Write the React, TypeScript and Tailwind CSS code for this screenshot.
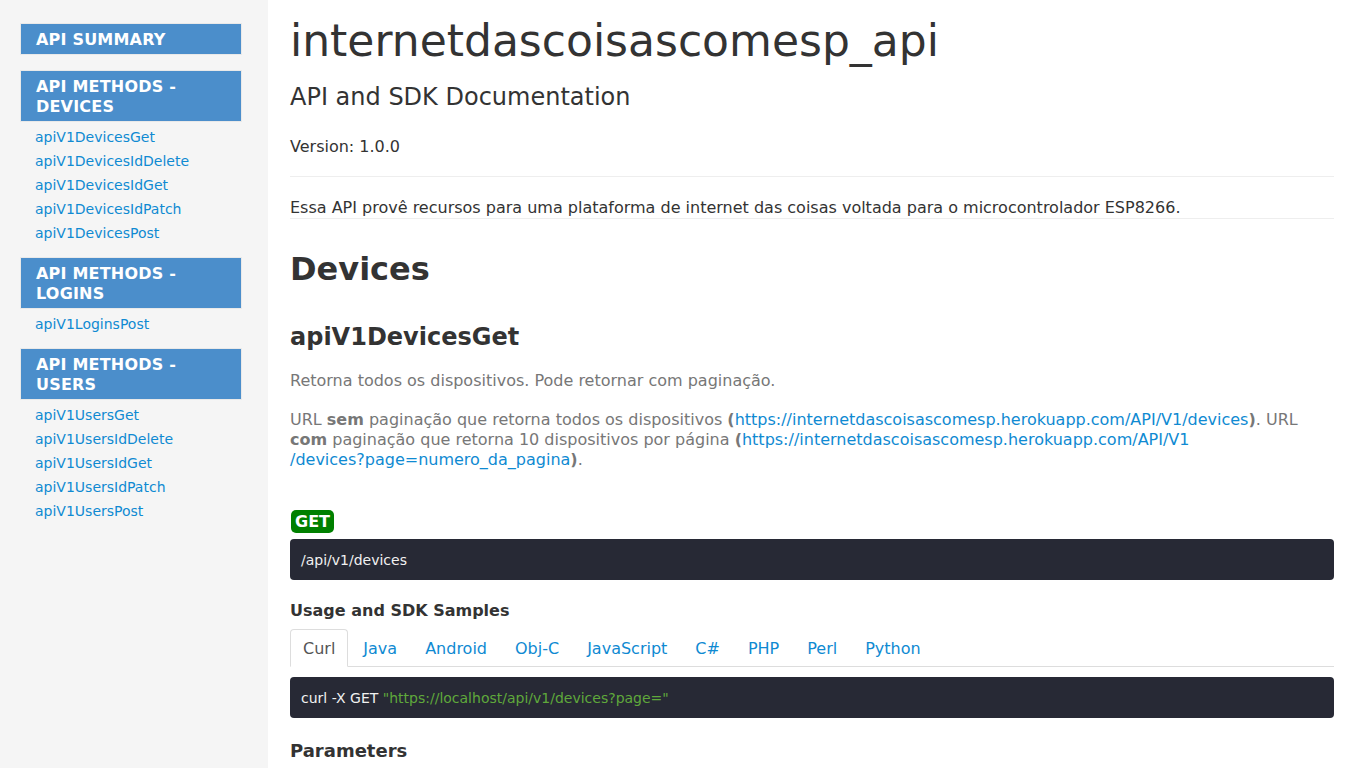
import React from 'react';

const sections = [
  { title: ['API SUMMARY'], links: [] as string[] },
  {
    title: ['API METHODS -', 'DEVICES'],
    links: ['apiV1DevicesGet', 'apiV1DevicesIdDelete', 'apiV1DevicesIdGet', 'apiV1DevicesIdPatch', 'apiV1DevicesPost'],
  },
  { title: ['API METHODS -', 'LOGINS'], links: ['apiV1LoginsPost'] },
  {
    title: ['API METHODS -', 'USERS'],
    links: ['apiV1UsersGet', 'apiV1UsersIdDelete', 'apiV1UsersIdGet', 'apiV1UsersIdPatch', 'apiV1UsersPost'],
  },
];

const tabs = ['Curl', 'Java', 'Android', 'Obj-C', 'JavaScript', 'C#', 'PHP', 'Perl', 'Python'];

const Sidebar: React.FC = () => (
  <aside className="w-[268px] shrink-0 bg-[#f5f5f5] pt-[23px] pl-[20px] pr-[26px] min-h-[1400px]">
    {sections.map((s, i) => (
      <div key={i} className={s.links.length ? 'mb-[12px]' : 'mb-[15px]'}>
        <div className="border border-[#e9e9e9] bg-[#4b8ecb] px-[15px] pt-[6px] pb-[4px] text-[16px] leading-[20px] font-bold text-white tracking-[0.2px]">
          {s.title.map((t, j) => (
            <div key={j}>{t}</div>
          ))}
        </div>
        {s.links.length > 0 && (
          <ul className="pt-[3px] pl-[15px]">
            {s.links.map((l) => (
              <li key={l} className="text-[14px] leading-[24px] text-[#0f8ad2]">
                <a href="#">{l}</a>
              </li>
            ))}
          </ul>
        )}
      </div>
    ))}
  </aside>
);

const App: React.FC = () => {
  return (
    <div className="flex min-h-screen bg-white font-['DejaVu_Sans',sans-serif] text-[#333]">
      <Sidebar />
      <main className="pl-[22px] w-[1066px]">
        <h1 className="mt-[15px] text-[44px] leading-[52px] text-[#333]">internetdascoisascomesp_api</h1>
        <h2 className="mt-[15px] text-[24px] leading-[30px] text-[#333]">API and SDK Documentation</h2>
        <p className="mt-[25px] text-[16px] leading-[20px]">Version: 1.0.0</p>
        <hr className="mt-[19px] border-t border-[#eeeeee]" />
        <div className="mt-[21px] border-b border-[#eeeeee] text-[16px] leading-[20px]">
          Essa API provê recursos para uma plataforma de internet das coisas voltada para o microcontrolador ESP8266.
        </div>

        <h1 className="mt-[30px] text-[32px] leading-[40px] font-bold">Devices</h1>
        <h2 className="mt-[33px] text-[24px] leading-[30px] font-bold">apiV1DevicesGet</h2>
        <p className="mt-[19px] text-[16px] leading-[20px] text-[#777]">
          Retorna todos os dispositivos. Pode retornar com paginação.
        </p>
        <p className="mt-[19px] text-[16px] leading-[20px] text-[#777]">
          URL <b>sem</b> paginação que retorna todos os dispositivos <b>(</b>
          <a href="#" className="text-[#0f8ad2]">https://internetdascoisascomesp.herokuapp.com/API/V1/devices</a>
          <b>)</b>. URL <b>com</b> paginação que retorna 10 dispositivos por página <b>(</b>
          <a href="#" className="text-[#0f8ad2]">
            https://internetdascoisascomesp.herokuapp.com/API/V1
            <br />
            /devices?page=numero_da_pagina
          </a>
          <b>)</b>.
        </p>

        <div className="mt-[40px] ml-px w-fit rounded-[5px] bg-[#008000] px-[4px] text-[16px] leading-[23px] font-bold text-white">
          GET
        </div>
        <div className="mt-[6px] rounded-[4px] bg-[#272935] px-[11px] pt-[11px] pb-[9px] text-[14px] leading-[21px] text-[#f1f1f1]">
          /api/v1/devices
        </div>

        <h3 className="mt-[21px] text-[16px] leading-[20px] font-bold">Usage and SDK Samples</h3>
        <ul className="mt-[8px] flex border-b border-[#dddddd]">
          {tabs.map((t, i) => (
            <li
              key={t}
              className={
                i === 0
                  ? 'mr-[2px] -mb-px rounded-t-[4px] border border-[#dddddd] border-b-white bg-white px-[12px] pt-[8px] pb-[6px] text-[16px] leading-[22px] text-[#555]'
                  : 'mr-[2px] -mb-px border border-transparent px-[12px] pt-[8px] pb-[6px] text-[16px] leading-[22px] text-[#0f8ad2]'
              }
            >
              {t}
            </li>
          ))}
        </ul>
        <div className="mt-[10px] rounded-[4px] bg-[#272935] px-[11px] pt-[11px] pb-[9px] text-[14px] leading-[21px] text-[#f1f1f1]">
          curl -X GET <span className="text-[#5fa83b]">"https://localhost/api/v1/devices?page="</span>
        </div>

        <h3 className="mt-[22px] text-[18px] leading-[22px] font-bold">Parameters</h3>
        <div className="h-[600px]" />
      </main>
    </div>
  );
};

export default App;
